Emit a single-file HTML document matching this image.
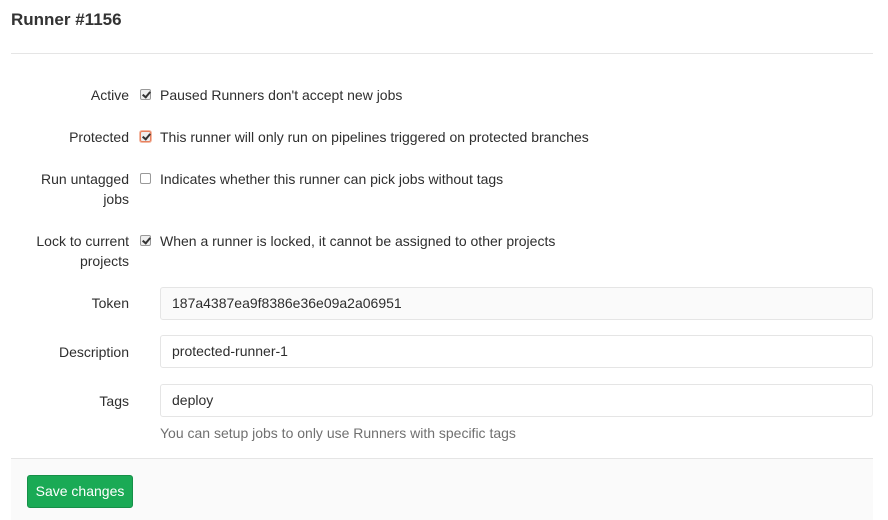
<!DOCTYPE html>
<html><head><style>
body{margin:0;width:888px;height:519px;background:#fff;font-family:"Liberation Sans",sans-serif;font-size:14px;color:#2e2e2e;position:relative;overflow:hidden}
.a{position:absolute}
h3{position:absolute;left:11px;top:10px;margin:0;font-size:17px;font-weight:bold;color:#333}
.hr{left:11px;width:862px;top:53px;height:1px;background:#e5e5e5}
.lbl{position:absolute;right:759px;text-align:right;line-height:20px;color:#2e2e2e}
.cb{position:absolute;left:140px;width:11px;height:11px;border:1px solid #999;border-radius:2px;background:#eee;box-sizing:border-box}
.cb.c::after{content:"";position:absolute;left:3px;top:0px;width:3px;height:6px;border:solid #333;border-width:0 2px 2px 0;transform:rotate(40deg)}
.t{position:absolute;left:160px;line-height:20px}
.in{position:absolute;left:160px;width:713px;height:33px;box-sizing:border-box;border:1px solid #e5e5e5;border-radius:3px;padding-left:11px;line-height:31px}
</style></head><body>
<h3>Runner #1156</h3>
<div class="a hr"></div>
<div class="lbl" style="top:85px">Active</div><div class="cb c" style="top:89px"></div><div class="t" style="top:85px">Paused Runners don't accept new jobs</div>
<div class="lbl" style="top:127px">Protected</div><div class="cb c" style="top:131px;border-color:#e8805e;box-shadow:0 0 0 1px #f3b9a4"></div><div class="t" style="top:127px">This runner will only run on pipelines triggered on protected branches</div>
<div class="lbl" style="top:169px">Run untagged<br>jobs</div><div class="cb" style="top:173px;background:#fff"></div><div class="t" style="top:169px">Indicates whether this runner can pick jobs without tags</div>
<div class="lbl" style="top:231px">Lock to current<br>projects</div><div class="cb c" style="top:235px"></div><div class="t" style="top:231px">When a runner is locked, it cannot be assigned to other projects</div>
<div class="lbl" style="top:293px">Token</div><div class="in" style="top:287px;background:#fafafa">187a4387ea9f8386e36e09a2a06951</div>
<div class="lbl" style="top:342px">Description</div><div class="in" style="top:335px">protected-runner-1</div>
<div class="lbl" style="top:391px">Tags</div><div class="in" style="top:384px">deploy</div>
<div class="t" style="top:423px;color:#707070">You can setup jobs to only use Runners with specific tags</div>
<div class="a" style="left:11px;top:458px;width:862px;height:61px;background:#fafafa;border-top:1px solid #e5e5e5"></div>
<div class="a" style="left:27px;top:475px;width:106px;height:33px;box-sizing:border-box;background:#1aaa55;border:1px solid #168f48;border-radius:3px;color:#fff;text-align:center;line-height:31px">Save changes</div>
</body></html>
